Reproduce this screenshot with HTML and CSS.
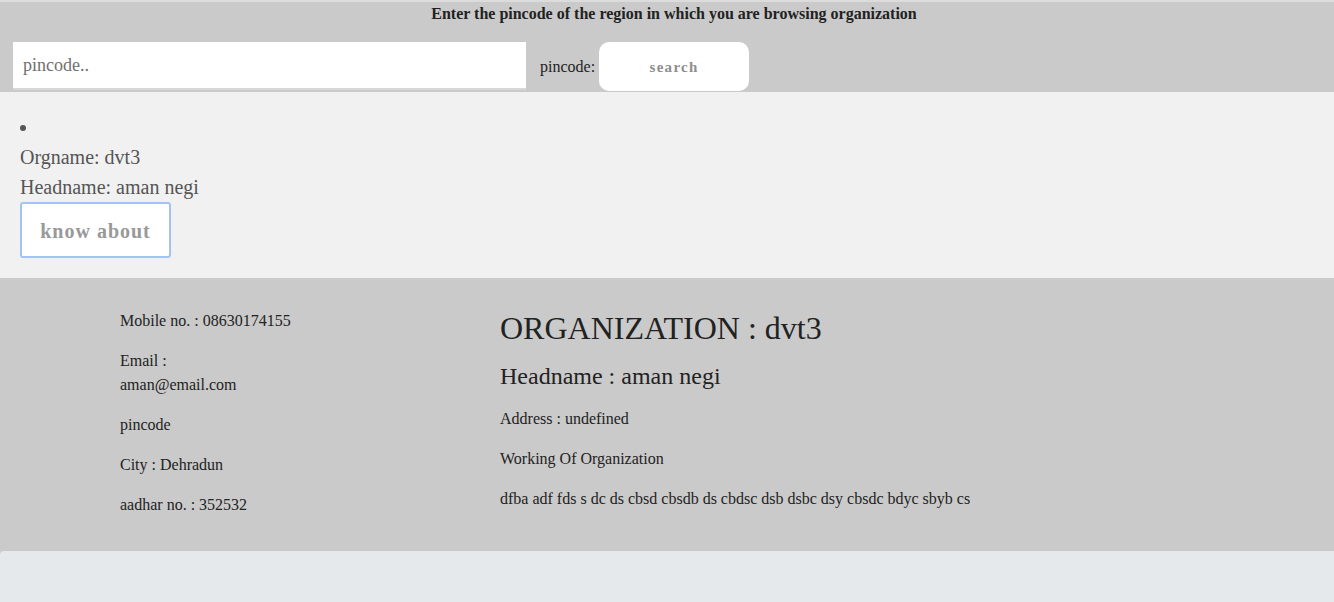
FILE: index.html
```html
<!DOCTYPE html>
<html>
<head>
<meta charset="utf-8">
<link rel="stylesheet" href="styles.css">
</head>
<body>
<div class="page">
  <header class="search-bar">
    <h4 class="search-title">Enter the pincode of the region in which you are browsing organization</h4>
    <form class="search-row">
      <input class="pin-input" type="text" placeholder="pincode..">
      <label class="pin-label">pincode:</label>
      <button class="search-btn" type="button">search</button>
    </form>
  </header>

  <section class="results">
    <ul class="result-list">
      <li class="result-item">
        <div class="line">Orgname: dvt3</div>
        <div class="line">Headname: aman negi</div>
        <button class="know-btn" type="button">know about</button>
      </li>
    </ul>
  </section>

  <section class="details">
    <div class="contact">
      <p>Mobile no. : 08630174155</p>
      <p>Email :<br>aman@email.com</p>
      <p>pincode</p>
      <p>City : Dehradun</p>
      <p>aadhar no. : 352532</p>
    </div>
    <div class="org">
      <h1 class="org-title">ORGANIZATION : dvt3</h1>
      <h2 class="org-head">Headname : aman negi</h2>
      <p>Address : undefined</p>
      <p>Working Of Organization</p>
      <p>dfba adf fds s dc ds cbsd cbsdb ds cbdsc dsb dsbc dsy cbsdc bdyc sbyb cs</p>
    </div>
  </section>

  <div class="bottom"></div>
</div>
</body>
</html>
```

FILE: styles.css
```css
html, body {
  margin: 0;
  padding: 0;
}
body {
  background: #cacaca;
  font-family: "Liberation Serif", "Times New Roman", serif;
  color: #222;
}
.page {
  display: flex;
  flex-direction: column;
  min-height: 100vh;
}
.search-bar {
  background: #cacaca;
  border-top: 2px solid #dcdcdc;
  height: 90px;
  box-sizing: content-box;
}
.search-title {
  margin: 0;
  padding: 3px 0 0 14px;
  text-align: center;
  font-size: 16px;
  line-height: 18px;
  font-weight: bold;
  color: #222;
}
.search-row {
  display: flex;
  align-items: center;
  margin: 19px 0 0 13px;
}
.pin-input {
  width: 513px;
  height: 48px;
  box-sizing: border-box;
  border: none;
  border-bottom: 2px solid #d8d8d8;
  background: #fff;
  padding: 0 10px;
  font-family: "Liberation Serif", "Times New Roman", serif;
  font-size: 18px;
  color: #333;
  outline: none;
  align-self: flex-start;
}
.pin-input::placeholder {
  color: #6f6f6f;
}
.pin-label {
  margin-left: 14px;
  margin-right: 4px;
  font-size: 16px;
  color: #222;
}
.search-btn {
  width: 150px;
  height: 49px;
  border: none;
  border-radius: 10px;
  background: #fff;
  font-family: "Liberation Serif", "Times New Roman", serif;
  font-weight: bold;
  font-size: 15px;
  letter-spacing: 1.3px;
  color: #8e8e8e;
  padding: 2px 0 0 0;
  align-self: flex-start;
}
.results {
  background: #f1f1f1;
  padding: 20px 20px 20px 20px;
  height: 146px;
}
.result-list {
  margin: 0;
  padding: 0;
  list-style: disc inside;
  color: #555;
  font-size: 20px;
}
.result-item {
  line-height: 30px;
}
.line {
  height: 30px;
  line-height: 30px;
}
.know-btn {
  display: block;
  width: 151px;
  height: 56px;
  background: #fff;
  border: 2px solid #a3c3f7;
  border-radius: 3px;
  font-family: "Liberation Serif", "Times New Roman", serif;
  font-weight: bold;
  font-size: 20px;
  letter-spacing: 1px;
  color: #999;
  padding: 2px 0 0 0;
}
.details {
  background: #cacaca;
  display: flex;
  padding: 31px 0 18px 120px;
  font-size: 16px;
  color: #222;
}
.details p {
  margin: 0 0 16px 0;
  line-height: 24px;
}
.contact {
  width: 380px;
}
.org-title {
  margin: -1px 0 0 0;
  font-size: 32px;
  line-height: 40px;
  font-weight: normal;
}
.org-head {
  margin: 13px 0 16px 0;
  font-size: 24px;
  line-height: 30px;
  font-weight: normal;
}
.bottom {
  flex: 1;
  background: #e6e9ec;
  border-top-left-radius: 4px;
}
```
